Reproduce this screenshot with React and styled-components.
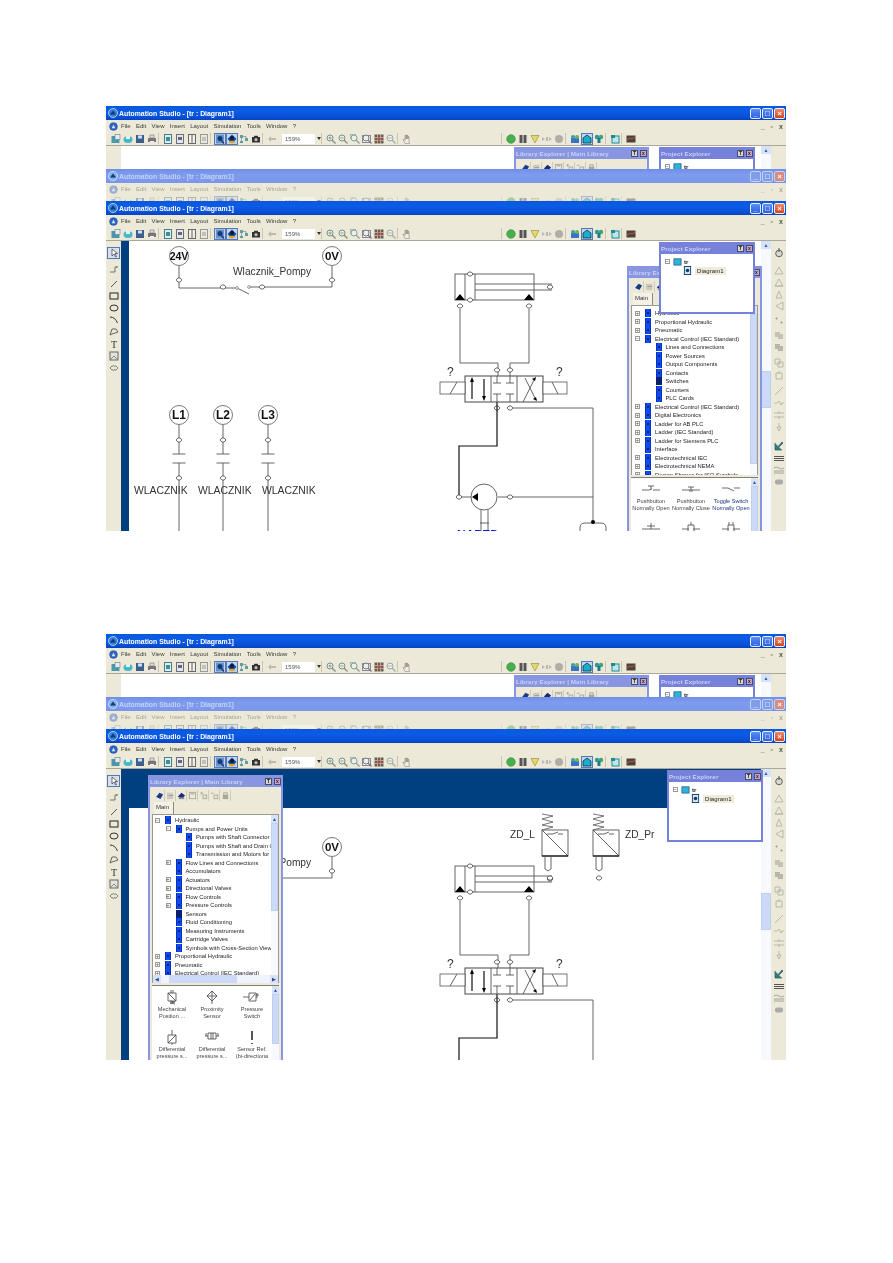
import React from 'react';
import styled, { createGlobalStyle } from 'styled-components';

const Global = createGlobalStyle`
  html, body { margin: 0; padding: 0; background: #fff; }
  body { font-family: "Liberation Sans", Arial, sans-serif; }
`;

const Page = styled.main`
  width: 893px;
  height: 1263px;
  box-sizing: border-box;
  padding: 106px 0 0 106px;
  overflow: hidden;
  display: flex;
  flex-direction: column;
  gap: 103px;
`;

const Shot = styled.section`
  width: 680px;
  display: flex;
  flex-direction: column;
  filter: blur(0.45px);
`;

const Frame = styled.div`
  height: ${({ $height }) => $height}px;
  overflow: hidden;
  display: flex;
  flex-direction: column;
  background: #fff;
`;

const TitleBar = styled.div`
  height: 14px;
  flex: none;
  display: flex;
  align-items: center;
  padding: 0 1px 0 2px;
  box-sizing: border-box;
  color: ${({ $faded }) => ($faded ? '#c4d0f6' : '#fff')};
  background: ${({ $faded }) =>
    $faded
      ? 'linear-gradient(#6f8fe8, #7f9bee 40%, #7b96ea)'
      : 'linear-gradient(#0b57dd, #0a5ce6 35%, #0a4fd8 80%, #0643bd)'};
`;

const TitleText = styled.span`
  font-size: 6.9px;
  font-weight: bold;
  letter-spacing: 0;
  margin-left: 0;
  padding-left: 1px;
  white-space: nowrap;
  flex: 1;
`;

const WinButton = styled.span`
  width: 11px;
  height: 11px;
  margin-left: 1px;
  box-sizing: border-box;
  border: 1px solid ${({ $faded }) => ($faded ? '#c6d2f4' : '#e8eefc')};
  border-radius: 2px;
  background: ${({ $close, $faded }) =>
    $close
      ? $faded ? '#d98a7e' : 'linear-gradient(#ee8a6a, #d8401c)'
      : $faded ? '#7f9eea' : 'linear-gradient(#5c90f4, #2a5ee0)'};
  color: #fff;
  font-size: 8px;
  line-height: 9px;
  font-weight: bold;
  text-align: center;
`;

const MenuBar = styled.div`
  height: 12px;
  flex: none;
  display: flex;
  align-items: center;
  background: #ece9d8;
  padding-left: 3px;
  font-size: 6px;
  color: #3a3a34;
`;

const Dimmable = styled.div`
  display: flex;
  align-items: center;
  height: 100%;
  opacity: ${({ $faded }) => ($faded ? 0.42 : 1)};
  flex: ${({ $grow }) => ($grow ? 1 : 'none')};
`;

const MenuLogo = styled.span`
  display: flex;
  margin-right: 3px;
`;

const MenuItem = styled.span`
  margin-right: 5.3px;
  white-space: nowrap;
`;

const MdiControls = styled.span`
  display: flex;
  gap: 6px;
  padding-right: 3px;
  font-size: 7px;
  font-weight: bold;
  color: #55554c;
`;

const ToolBar = styled.div`
  height: 13px;
  flex: none;
  display: flex;
  align-items: center;
  background: #ece9d8;
  padding-left: 4px;
  border-bottom: 1px solid #aca899;
  overflow: hidden;
`;

const ToolGroup = styled.div`
  display: flex;
  align-items: center;
  height: 11px;
  box-sizing: border-box;
  margin-left: ${({ $gap }) => $gap || 0}px;
  padding-left: ${({ $first }) => ($first ? 0 : 3)}px;
  border-left: ${({ $first }) => ($first ? 'none' : '1px solid #c9c5b2')};
`;

const ToolButton = styled.span`
  width: 12px;
  height: 12px;
  box-sizing: border-box;
  display: flex;
  align-items: center;
  justify-content: center;
  border: 1px solid ${({ $on }) => ($on ? '#5479b8' : 'transparent')};
  background: ${({ $on }) => ($on ? '#c7d5ec' : 'transparent')};
`;

const Combo = styled.div`
  width: 39px;
  margin-left: 4px;
  display: flex;
  align-items: center;
  flex: none;
`;

const ComboField = styled.span`
  width: 33px;
  height: 10px;
  background: #fff;
  font-size: 6px;
  line-height: 10px;
  padding-left: 3px;
  box-sizing: border-box;
  color: #555;
`;

const ComboArrow = styled.span`
  margin-left: 2px;
  width: 0;
  height: 0;
  border: 2px solid transparent;
  border-top: 3px solid #333;
  border-bottom: 0;
`;

const Workspace = styled.div`
  flex: 1;
  min-height: 0;
  display: flex;
`;

const SideTools = styled.div`
  width: 15px;
  flex: none;
  background: #ece9d8;
  display: flex;
  flex-direction: column;
  align-items: center;
  padding-top: 6px;
  box-sizing: border-box;
  overflow: hidden;
`;

const SideGroup = styled.div`
  display: flex;
  flex-direction: column;
  align-items: center;
  margin-top: ${({ $gap }) => $gap || 0}px;
`;

const SideButton = styled.span`
  width: 13px;
  height: 12px;
  box-sizing: border-box;
  display: flex;
  align-items: center;
  justify-content: center;
  border: 1px solid ${({ $on }) => ($on ? '#5479b8' : 'transparent')};
  background: ${({ $on }) => ($on ? '#d8e0ee' : 'transparent')};
`;

const DocArea = styled.div`
  position: relative;
  flex: 1;
  min-width: 0;
  box-sizing: border-box;
  background: ${({ $band }) => ($band ? '#003f80' : '#fff')};
  padding: ${({ $top }) => $top || 0}px 0 0 8px;
`;

const Sheet = styled.div`
  background: #fff;
  height: 100%;
`;

const Drawing = styled.svg`
  display: block;
  text { font-family: "Liberation Sans", Arial, sans-serif; }
`;

const ScrollTrack = styled.div`
  width: ${({ $w }) => $w || 10}px;
  flex: none;
  background: #f8f9fe;
  display: flex;
  flex-direction: column;
  align-items: stretch;
  overflow: hidden;
`;

const ScrollArrow = styled.span`
  height: 8px;
  flex: none;
  background: #d6e1fa;
  color: #3a5aa8;
  font-size: 5px;
  line-height: 8px;
  text-align: center;
`;

const ScrollThumb = styled.span`
  flex: none;
  height: ${({ $h }) => $h}px;
  margin-top: ${({ $top }) => $top}px;
  background: #ccd9f8;
  border: 1px solid #bfcff4;
  box-sizing: border-box;
`;

const Panel = styled.div`
  position: absolute;
  left: ${({ $x }) => $x}px;
  top: ${({ $y }) => $y}px;
  width: ${({ $w }) => $w}px;
  height: ${({ $h }) => $h}px;
  box-sizing: border-box;
  border: 2px solid ${({ $frame }) => $frame};
  border-top-width: 1px;
  background: #ece9d8;
  display: flex;
  flex-direction: column;
  overflow: hidden;
  z-index: ${({ $z }) => $z || 1};
`;

const PanelTitle = styled.div`
  height: 11px;
  flex: none;
  display: flex;
  align-items: center;
  background: ${({ $frame }) => $frame};
  color: #c9d2f6;
  font-size: 6.2px;
  font-weight: bold;
  letter-spacing: 0.1px;
  margin: 0 -2px;
  padding: 0 2px;
  white-space: nowrap;
`;

const PanelTitleText = styled.span`
  flex: 1;
  overflow: hidden;
`;

const PanelButton = styled.span`
  width: 7px;
  height: 7px;
  margin-left: 2px;
  background: ${({ $close }) => ($close ? '#c8a4c8' : '#d8d6cc')};
  border: 1px solid #4a4a70;
  box-sizing: border-box;
  color: #222;
  font-size: 5px;
  line-height: 5px;
  text-align: center;
  flex: none;
`;

const LibTools = styled.div`
  height: 14px;
  flex: none;
  display: flex;
  align-items: center;
  padding: 2px 0 0 4px;
  box-sizing: border-box;
`;

const LibTool = styled.span`
  width: 11px;
  height: 11px;
  box-sizing: border-box;
  border-right: 1px solid #cfcbb8;
  display: flex;
  align-items: center;
  justify-content: center;
`;

const TabRow = styled.div`
  height: 13px;
  flex: none;
  display: flex;
  align-items: flex-end;
  padding-left: 4px;
`;

const Tab = styled.span`
  width: 20px;
  height: 12px;
  font-size: 6px;
  line-height: 11px;
  padding-left: 2px;
  box-sizing: border-box;
  background: #f4f2e6;
  border-right: 1px solid #8c8a7c;
  color: #333;
`;

const TreeBox = styled.div`
  height: ${({ $h }) => $h}px;
  flex: none;
  display: flex;
  margin: 0 2px;
  background: #fff;
  border: 1px solid #9c9a8c;
  border-bottom: 0;
  box-sizing: border-box;
  overflow: hidden;
`;

const TreeList = styled.div`
  flex: 1;
  min-width: 0;
  overflow: hidden;
  padding: ${({ $pad }) => $pad}px 0 0 ${({ $left }) => $left}px;
`;

const TreeRow = styled.div`
  height: 8.5px;
  display: flex;
  align-items: center;
  padding-left: ${({ $level }) => $level * 10.5}px;
  white-space: nowrap;
`;

const Expander = styled.span`
  width: 5px;
  height: 5px;
  box-sizing: border-box;
  flex: none;
  margin-right: 5px;
  border: ${({ $show }) => ($show ? '1px solid #9a9a90' : 'none')};
  color: #444;
  font-size: 5px;
  line-height: 3px;
  text-align: center;
`;

const ProjectExpander = styled(Expander)`
  margin-right: 3px;
`;

const TreeIcon = styled.span`
  width: 6px;
  height: 8px;
  flex: none;
  margin-right: 4px;
  box-sizing: border-box;
  background: ${({ $on }) => ($on ? '#0a1f70' : '#0c4cf0')};
  border-left: 1px solid ${({ $on }) => ($on ? '#0a1f70' : '#0a2fc0')};
  border-right: 1px solid ${({ $on }) => ($on ? '#0a1f70' : '#0a2fc0')};
  position: relative;
  &::after {
    content: '';
    position: absolute;
    left: 1px;
    top: 3px;
    width: 2px;
    height: 2px;
    background: #0a2070;
  }
`;

const TreeLabel = styled.span`
  font-size: 5.8px;
  color: #222;
`;

const HScroll = styled.div`
  height: 8px;
  flex: none;
  margin: 0 2px;
  background: #f0f3fb;
  display: flex;
  align-items: stretch;
  font-size: 5px;
  line-height: 8px;
  color: #2a4a98;
  border: 1px solid #9c9a8c;
  border-width: 0 1px;
  box-sizing: border-box;
`;

const HThumb = styled.span`
  width: 68px;
  margin-left: 8px;
  background: #ccd9f8;
`;

const HEnd = styled.span`
  width: 8px;
  text-align: center;
  background: #d6e1fa;
  margin-left: ${({ $auto }) => ($auto ? 'auto' : 0)};
`;

const PaletteBox = styled.div`
  flex: 1;
  min-height: 0;
  display: flex;
  margin: 2px 2px 0;
  background: #fff;
  border-top: 1px solid #808074;
  overflow: hidden;
`;

const PaletteGrid = styled.div`
  flex: 1;
  min-width: 0;
  display: grid;
  grid-template-columns: repeat(3, 1fr);
  grid-auto-rows: 40px;
  overflow: hidden;
`;

const PaletteCell = styled.div`
  display: flex;
  flex-direction: column;
  align-items: center;
  overflow: hidden;
  color: ${({ $on }) => ($on ? '#1e2f80' : '#444')};
`;

const PaletteArt = styled.svg`
  margin-top: 4px;
  flex: none;
`;

const PaletteLine = styled.span`
  font-size: 5.6px;
  line-height: 7px;
  white-space: nowrap;
`;

const ProjectBody = styled.div`
  flex: 1;
  background: #fff;
  padding: 3px 0 0 4px;
  box-sizing: border-box;
`;

const ProjectRow = styled.div`
  height: 9px;
  display: flex;
  align-items: center;
  padding-left: ${({ $level }) => $level * 9}px;
  font-size: 6px;
  color: #222;
`;

const ProjectRootLabel = styled.span`
  font-weight: bold;
  margin-left: 2px;
`;

const ProjectLeafLabel = styled.span`
  background: #efedda;
  margin-left: 3px;
  padding: 1px 2px;
  letter-spacing: 0.1px;
`;

const Mini = ({ children, s = 10 }) => (
  <svg width={s} height={s} viewBox="0 0 10 10">{children}</svg>
);

const Mag = ({ c = '#7d9084', children }) => (
  <>
    <circle cx="4" cy="4" r="3" fill="#e8f0e8" stroke={c} />
    <line x1="6" y1="6" x2="9.5" y2="9.5" stroke={c} strokeWidth="1.3" />
    {children}
  </>
);

const GLYPHS = {
  newDoc: <><rect x="0.5" y="2" width="8" height="7" fill="#4a97ae" /><rect x="4" y="0.5" width="5" height="5" fill="#dfeef2" stroke="#666" strokeWidth=".5" /></>,
  open: <><ellipse cx="5" cy="5.5" rx="4.5" ry="3.5" fill="#45b7c6" /><rect x="3" y="2" width="4" height="3" fill="#e2f2ee" /></>,
  save: <><rect x="1" y="1" width="8" height="8" fill="#3c5f8e" /><rect x="3" y="1.5" width="4" height="3" fill="#cfe0ee" /></>,
  print: <><rect x="1" y="4" width="8" height="4" fill="#777" /><rect x="3" y="1" width="4" height="3" fill="#ddd" stroke="#666" strokeWidth=".5" /><rect x="3" y="7" width="4" height="2" fill="#eee" /></>,
  page1: <><rect x="1.5" y="0.5" width="7" height="9" fill="#dceef0" stroke="#4d7a88" /><rect x="3" y="3" width="4" height="4" fill="#3f8f90" /></>,
  page2: <><rect x="1.5" y="0.5" width="7" height="9" fill="#e6e6ea" stroke="#66707e" /><rect x="3" y="3" width="4" height="3" fill="#667" /></>,
  page3: <><rect x="1.5" y="0.5" width="7" height="9" fill="#eee" stroke="#6a6a60" /><line x1="5" y1="1" x2="5" y2="9" stroke="#666" /></>,
  page4: <><rect x="1.5" y="0.5" width="7" height="9" fill="#e8e8e2" stroke="#9a9a90" /><line x1="3" y1="4" x2="7" y2="4" stroke="#999" /><line x1="3" y1="6" x2="7" y2="6" stroke="#999" /></>,
  zoomDoc: <><rect x="1" y="0.5" width="8" height="9" fill="#6a94c8" /><circle cx="5" cy="4.5" r="2.5" fill="#123a78" /><line x1="6" y1="6" x2="9" y2="9.5" stroke="#123a78" strokeWidth="1.3" /></>,
  zoomBlob: <><path d="M5 .5L9.5 5 5 9.5.5 5z" fill="#1a4a98" /><circle cx="5" cy="4" r="2" fill="#0a1838" /><rect x="2" y="7" width="6" height="2" fill="#d8a830" /></>,
  tree: <><path d="M1 1h3v3H1zM6 4h3v3H6zM1 7h3v2H1z" fill="#5aa0a6" /><path d="M4 2.5h3V4M2.5 4v3" stroke="#777" fill="none" strokeWidth=".6" /></>,
  camera: <><rect x="1" y="3" width="8" height="5.5" fill="#333" /><rect x="3" y="1.8" width="4" height="2" fill="#333" /><circle cx="5" cy="5.7" r="1.6" fill="#bbb" /></>,
  back: <path d="M1 5l3-3v2h5v2H4v2z" fill="#bdb9ac" />,
  magPlus: <Mag><path d="M2.500 4h3M4 2.500v3" stroke="#678" strokeWidth=".7" /></Mag>,
  magMinus: <Mag><path d="M2.500 4h3" stroke="#678" strokeWidth=".7" /></Mag>,
  magDoc: <><rect x="0.5" y="0.5" width="5" height="4" fill="#cfe0d4" stroke="#8aa498" strokeWidth=".6" /><Mag c="#86a098" /></>,
  magBox: <><rect x="0.5" y="1.5" width="8" height="7" fill="#f0f0ea" stroke="#889" /><Mag c="#778" /></>,
  magGrid: <><rect x="0.5" y="0.5" width="9" height="9" fill="#6e5e52" /><path d="M3.500 0v10M6.500 0v10M0 3.500h10M0 6.500h10" stroke="#d8c4b0" strokeWidth=".7" /><rect x="3.500" y="3.500" width="3" height="3" fill="#b84850" /></>,
  magBack: <Mag c="#9aaaa4"><path d="M2 4h4" stroke="#c090a8" strokeWidth=".7" /></Mag>,
  hand: <path d="M3 9.5L1 5.5l1-.5 1 1.5V1.5h1V5 1h1v4-3.5h1V5 2.5h1V7L7.5 9.5z" fill="#f2efe2" stroke="#8a7a7a" strokeWidth=".55" />,
  run: <circle cx="5" cy="5" r="4.3" fill="#46b04e" stroke="#3a8a40" strokeWidth=".6" />,
  pause: <><rect x="1.5" y="1" width="3" height="8" fill="#555" /><rect x="5.5" y="1" width="3" height="8" fill="#555" /></>,
  funnel: <path d="M1 1.5h8L5 9z" fill="#e6d860" stroke="#9a9248" strokeWidth=".7" />,
  fast: <path d="M0 3l3 2-3 2zM4 3h2v4H4zM7 3l3 2-3 2z" fill="#bab8ae" />,
  stop: <circle cx="5" cy="5" r="4" fill="#b0aea6" />,
  net1: <><rect x="1" y="4" width="8" height="5" fill="#3a72c8" /><circle cx="3" cy="3" r="2" fill="#3aa0a0" /><circle cx="7" cy="3" r="2" fill="#6ab05a" /></>,
  net2: <path d="M1 9V4l4-3 4 3v5z" fill="#16b0c8" stroke="#0a3050" strokeWidth=".8" />,
  net3: <><circle cx="3" cy="3" r="2.2" fill="#2f9a98" /><circle cx="7" cy="3" r="2.2" fill="#4aa07a" /><rect x="3.5" y="4" width="3" height="5" fill="#1f7a90" /></>,
  net4: <><rect x="2" y="2" width="7" height="7" fill="#bfe6e6" stroke="#1f8a98" /><rect x="1" y="1" width="4" height="3" fill="#1f8a98" /></>,
  chart: <><rect x="0.5" y="1.5" width="9" height="7" fill="#4a4440" /><path d="M1 6l3-2 2 1 3-2" stroke="#e05030" fill="none" strokeWidth=".9" /></>,
};

const TOOLBAR_GROUPS = [
  { first: true, items: ['newDoc', 'open', 'save', 'print'] },
  { items: ['page1', 'page2', 'page3', 'page4'] },
  { items: [{ g: 'zoomDoc', on: true }, { g: 'zoomBlob', on: true }, 'tree', 'camera'] },
  { items: ['back'] },
  { combo: true },
  { items: ['magPlus', 'magMinus', 'magDoc', 'magBox', 'magGrid', 'magBack'] },
  { items: ['hand'] },
  { gap: 88, items: ['run', 'pause', 'funnel', 'fast', 'stop'] },
  { items: ['net1', { g: 'net2', on: true }, 'net3'] },
  { items: ['net4'] },
  { items: ['chart'] },
];

const MENU = ['File', 'Edit', 'View', 'Insert', 'Layout', 'Simulation', 'Tools', 'Window', '?'];

const Toolbar = ({ faded }) => (
  <ToolBar>
    <Dimmable $faded={faded}>
      {TOOLBAR_GROUPS.map((group, i) =>
        group.combo ? (
          <Combo key={i}>
            <ComboField>159%</ComboField>
            <ComboArrow />
          </Combo>
        ) : (
          <ToolGroup key={i} $first={group.first} $gap={group.gap}>
            {group.items.map((item, j) => {
              const kind = item.g || item;
              return (
                <ToolButton key={j} $on={item.on}>
                  <Mini>{GLYPHS[kind]}</Mini>
                </ToolButton>
              );
            })}
          </ToolGroup>
        )
      )}
    </Dimmable>
  </ToolBar>
);

const AppLogo = ({ light }) => (
  <svg width="10" height="10" viewBox="0 0 10 10">
    <circle cx="5" cy="5" r="4.5" fill={light ? '#7fb0e8' : '#2f7fd8'} stroke="#e8f0fa" strokeWidth=".7" />
    <path d="M2 6.5l3-4 3 4z" fill="#123a78" />
  </svg>
);

const LEFT_GROUPS = [
  { gap: 0, items: [{ on: true, d: <path d="M3 1v7l2-2 1.500 3 1-.5L6 5.500h2.500z" fill="#fff" stroke="#333" strokeWidth=".7" /> }] },
  { gap: 4, items: [{ d: <path d="M2 8h4V3h2M1 8h1M8 2v2" stroke="#555" fill="none" strokeWidth=".8" /> }] },
  {
    gap: 3,
    items: [
      { d: <line x1="2" y1="8" x2="8" y2="2" stroke="#555" /> },
      { d: <rect x="1" y="2" width="8" height="6" fill="none" stroke="#222" /> },
      { d: <ellipse cx="5" cy="5" rx="4" ry="3" fill="none" stroke="#333" /> },
      { d: <path d="M1 2Q6 2 8.5 8" fill="none" stroke="#333" /> },
      { d: <path d="M1 8L3 2h4l2 3-6 2z" fill="none" stroke="#444" strokeWidth=".8" /> },
      { d: <text x="5" y="9" textAnchor="middle" fontSize="10" fontFamily="Liberation Serif" fill="#333">T</text> },
      { d: <><rect x="1" y="1" width="8" height="8" fill="#e4e4da" stroke="#666" /><path d="M2 8l3-3 3 3" stroke="#888" fill="none" /></> },
      { d: <path d="M1 5l2-2h4l2 2-2 2H3z" fill="none" stroke="#666" strokeWidth=".8" /> },
    ],
  },
];

const greyStroke = { stroke: '#b4b2a6', fill: 'none', strokeWidth: 0.9 };

const RIGHT_GROUPS = [
  { gap: 0, items: [<><circle cx="5" cy="5.500" r="3.300" stroke="#555" fill="#d8d8cc" strokeWidth=".9" /><path d="M5 0v4" stroke="#555" /></>] },
  { gap: 5, items: [<path d="M1 9l4-7 4 7z" {...greyStroke} />, <path d="M1 9l4-7 4 7zM1 9h8" {...greyStroke} />, <path d="M2 9l3-7 3 7z" {...greyStroke} />, <path d="M9 1L2 5l7 4z" {...greyStroke} />] },
  { gap: 2, items: [<path d="M2 3h1v1H2zM7 7h1v1H7z" stroke="#999" fill="#999" />] },
  { gap: 3, items: [<path d="M1 2h5v5H1zM4 4h5v5H4z" fill="#c4c2b8" />, <path d="M1 2h5v5H1zM4 4h5v5H4z" fill="#b8b6aa" />] },
  { gap: 4, items: [<path d="M1 1h5v5H1zM4 4h5v5H4z" {...greyStroke} />, <path d="M2 3h6v6H2zM5 1v3" {...greyStroke} />] },
  { gap: 4, items: [<line x1="1" y1="9" x2="9" y2="1" {...greyStroke} />, <path d="M0 5h3l2-2 2 4 1-2h2" {...greyStroke} />, <path d="M0 3h10M0 7h10M5 1v3M5 6v3" {...greyStroke} />, <path d="M5 1v4M3 5h4l-2 4z" {...greyStroke} />] },
  { gap: 7, items: [<path d="M1 2v7h7M3 7l5-6 1 1-5 5z" fill="#3a7a90" stroke="#1f5a5a" strokeWidth=".7" />, <path d="M0 3h10v1H0zM0 5h10v1H0zM0 7h10v1H0z" fill="#555" />, <path d="M0 3q2-2 5 0t5 0M0 6h10M0 8h10" stroke="#888" fill="none" strokeWidth=".7" />, <rect x="1" y="2.500" width="8" height="5" rx="2" fill="#aaa" />] },
];

const Node = ({ x, y }) => (
  <path
    d={`M${x - 3} ${y}L${x - 1.2} ${y - 2}H${x + 1.2}L${x + 3} ${y}L${x + 1.2} ${y + 2}H${x - 1.2}Z`}
    fill="#fff"
    stroke="#444"
    strokeWidth="0.8"
  />
);

const Wire = ({ d, heavy }) => (
  <path d={d} fill="none" stroke={heavy ? '#111' : '#555'} strokeWidth={heavy ? 1.2 : 0.9} />
);

const Badge = ({ x, y, label, size = 12 }) => (
  <g>
    <circle cx={x} cy={y} r="9.5" fill="#fff" stroke="#555" strokeWidth="0.8" />
    <text x={x} y={y + size * 0.36} textAnchor="middle" fontSize={size} fontWeight="bold" fill="#111">{label}</text>
  </g>
);

const PowerLine = () => (
  <g>
    <Badge x={179} y={255} label="24V" size={10.5} />
    <Badge x={332} y={255} label="0V" size={11.5} />
    <Wire d="M179 265V287H237M249 286H332V265" />
    <Wire d="M237 287L249 293" />
    <circle cx="237" cy="287" r="1.400" fill="#fff" stroke="#555" strokeWidth=".6" />
    <circle cx="249" cy="286" r="1.400" fill="#fff" stroke="#555" strokeWidth=".6" />
    <Node x={179} y={279} />
    <Node x={332} y={279} />
    <Node x={223} y={286} />
    <Node x={262} y={286} />
    <text x="233" y="274" fontSize="10.2" fill="#333">Wlacznik_Pompy</text>
  </g>
);

const Lamp = ({ x, label, textX }) => (
  <g>
    <Badge x={x} y={414} label={label} />
    <Wire d={`M${x} 424V453M${x - 6.5} 453H${x + 6.5}M${x - 6.5} 462H${x + 6.5}M${x} 462V531`} />
    <Node x={x} y={439} />
    <Node x={x} y={477} />
    <text x={textX} y="493" fontSize="10.4" fill="#333">WLACZNIK</text>
  </g>
);

const Cylinder = () => (
  <g>
    <rect x="455" y="273" width="79" height="26" fill="#fff" stroke="#555" strokeWidth=".9" />
    <Wire d="M465 273V299M475 273V299M475 283H552M475 289H552" />
    <path d="M455 299l5-6 5 6zM524 299l5-6 5 6z" fill="#000" />
    <Node x={470} y={273} />
    <Node x={470} y={299} />
    <Node x={550} y={286} />
    <Node x={460} y={305} />
    <Node x={529} y={305} />
  </g>
);

const Valve = () => (
  <g>
    <rect x="465" y="375" width="78" height="26" fill="#fff" stroke="#444" strokeWidth="1" />
    <rect x="440" y="381" width="25" height="12" fill="#fff" stroke="#555" strokeWidth=".8" />
    <rect x="543" y="381" width="24" height="12" fill="#fff" stroke="#555" strokeWidth=".8" />
    <Wire d="M450 393L457 381M552 381L558 393M491 375V401M517 375V401" />
    <Wire d="M472 398V378M484 378V398" heavy />
    <path d="M472 376l-2 5h4zM484 400l-2-5h4z" fill="#000" />
    <Wire d="M497 375V382M493 382H501M510 375V382M506 382H514M493 393H501M497 393V401M506 393H514M510 393V401" />
    <Wire d="M523 401L535 377M525 377L536 399" />
    <path d="M536 376l-4 2 3 2zM537 400l-4-2 3-2z" fill="#000" />
    <text x="447" y="375" fontSize="12" fill="#333">?</text>
    <text x="556" y="375" fontSize="12" fill="#333">?</text>
  </g>
);

const ValveLines = () => (
  <g>
    <Wire d="M460 308V362H498V375M529 308V362H510V375" />
    <Node x={497} y={369} />
    <Node x={510} y={369} />
    <Node x={497} y={407} />
    <Node x={510} y={407} />
    <Wire d="M497 401V445H459V496" heavy />
    <Wire d="M513 407H593V521" />
  </g>
);

const PumpUnit = () => (
  <g>
    <Wire d="M459 496H471M498 496H593" />
    <circle cx="484" cy="496" r="13" fill="#fff" stroke="#555" strokeWidth=".9" />
    <path d="M472 496l6-4v8z" fill="#000" />
    <Node x={459} y={496} />
    <Node x={510} y={496} />
    <Wire d="M481 509V531M488 509V531M480 522H489" />
    <Wire d="M580 531V527Q580 522 585 522H601Q606 522 606 527V531" />
    <circle cx="593" cy="521" r="2" fill="#000" />
    <text x="457" y="537.5" fontSize="12" fontWeight="bold" fill="#0a18d8">NAPED</text>
  </g>
);

const Sensor = ({ x, label, textX, probeX, probeEnd }) => (
  <g>
    <rect x={x} y="829" width="26" height="26" fill="#fff" stroke="#555" strokeWidth=".9" />
    <path d={`M${x} 813l11 2-11 3 11 3-11 3 11 2-11 3`} fill="none" stroke="#555" strokeWidth=".8" />
    <Wire d={`M${x} 829L${x + 26} 855M${x + 5} 833H${x + 11}M${x + 11} 833L${x + 16} 831M${x + 16} 833H${x + 21}`} />
    <path d={`M${x} 855H${x + 26}`} stroke="#111" strokeWidth="1.2" />
    <Wire d={`M${probeX} 855V868L${probeX + 3} 870L${probeX + 6} 868V855`} />
    <Node x={probeEnd} y={877} />
    <text x={textX} y="837" fontSize="10.2" fill="#333">{label}</text>
  </g>
);

const Circuit = ({ dy = 0, withPump }) => (
  <g transform={`translate(0 ${dy})`}>
    <Cylinder />
    <ValveLines />
    <Valve />
    {withPump && <PumpUnit />}
  </g>
);

const TreeRows = ({ rows, pad, left }) => (
  <TreeList $pad={pad} $left={left}>
    {rows.map((row, i) => (
      <TreeRow key={i} $level={row.l || 0}>
        <Expander $show={row.x}>{row.x}</Expander>
        <TreeIcon $on={row.on} />
        <TreeLabel>{row.t}</TreeLabel>
      </TreeRow>
    ))}
  </TreeList>
);

const PAL = { fill: 'none', stroke: '#444', strokeWidth: 0.8 };

const PALETTE_ART = {
  pushOpen: <path d="M1 8h7M12 8h7M8 8l3-1M7 4h6M10 4v3" {...PAL} />,
  pushClosed: <path d="M1 8h18M7 5h6M10 5v3M8 9h4" {...PAL} />,
  toggle: <path d="M1 6h6l6 3M13 6h6" {...PAL} />,
  contact: <path d="M1 7h18M6 4h8M10 1v6" {...PAL} />,
  contactB: <path d="M1 7h7M12 7h7M7 3h6v8H7zM10 0v3" {...PAL} />,
  contactC: <path d="M1 7h7M12 7h7M7 3h6v8H7zM8 0v3M12 0v3" {...PAL} />,
  mech: <path d="M6 3h8v8H6zM6 3l8 8M9 0v3M11 0v3M8 11l5 1-5 1 5 1" {...PAL} />,
  prox: <path d="M10 1l5 5-5 5-5-5zM5 6h10M10 1v13" {...PAL} />,
  press: <path d="M1 7h6M7 3h7v8H7zM8 10l5-6M14 5h3M15 3v5" {...PAL} />,
  diffA: <path d="M6 5h8v8H6zM6 13l8-8M10 0v5M10 13v2" {...PAL} />,
  diffB: <path d="M3 6h3M6 3h8v6H6zM14 6h3M9 3v6M11 3v6M4 3v3M16 3v3" {...PAL} />,
  sensorRef: <path d="M10 1v9M10 13v1" fill="none" stroke="#111" strokeWidth="1.4" />,
};

const PaletteItem = ({ art, lines, on }) => (
  <PaletteCell $on={on}>
    <PaletteArt width="20" height="16" viewBox="0 0 20 16">{PALETTE_ART[art]}</PaletteArt>
    <PaletteLine>{lines[0]}</PaletteLine>
    <PaletteLine>{lines[1]}</PaletteLine>
  </PaletteCell>
);

const LIB_TOOLS = [
  <><path d="M1 7l4-5 4 2-3 5z" fill="#1a3a8a" /><path d="M1 7l4 2" stroke="#e8e8f0" /></>,
  <><rect x="1" y="2" width="7" height="7" fill="#ccc9ba" /><path d="M3 5h5" stroke="#999" /></>,
  <><path d="M1 6l4-4 4 3-4 4z" fill="#1a2a78" /><rect x="2" y="7" width="6" height="2" fill="#889" /></>,
  <><rect x="1.500" y="1.500" width="7" height="7" fill="none" stroke="#aaa89a" /><rect x="3" y="2" width="4" height="2" fill="#bbb9aa" /></>,
  <><path d="M3 1v3M1.500 2.500h3" stroke="#a8a69a" /><rect x="4.500" y="4.500" width="4" height="4" fill="none" stroke="#a8a69a" /></>,
  <><path d="M1 2.500h3" stroke="#a8a69a" /><rect x="4.500" y="4.500" width="4" height="4" fill="none" stroke="#a8a69a" /></>,
  <><rect x="2" y="4" width="6" height="5" fill="#a8a69a" /><path d="M3 4V2h4v2" stroke="#a8a69a" fill="none" /></>,
];

const LibraryPanel = ({ x, y, rows, palette, treeH, pad, left, hscroll, z }) => (
  <Panel $x={x} $y={y} $w={135} $h={300} $frame="#8896e2" $z={z}>
    <PanelTitle $frame="#8896e2">
      <PanelTitleText>Library Explorer | Main Library</PanelTitleText>
      <PanelButton>T</PanelButton>
      <PanelButton $close>x</PanelButton>
    </PanelTitle>
    <LibTools>
      {LIB_TOOLS.map((tool, i) => (
        <LibTool key={i}><Mini s={9}>{tool}</Mini></LibTool>
      ))}
    </LibTools>
    <TabRow><Tab>Main</Tab></TabRow>
    <TreeBox $h={treeH}>
      <TreeRows rows={rows} pad={pad} left={left} />
      <ScrollTrack $w={7}>
        <ScrollArrow>▲</ScrollArrow>
        <ScrollThumb $h={hscroll ? 88 : 150} $top={0} />
      </ScrollTrack>
    </TreeBox>
    {hscroll && (
      <HScroll>
        <HEnd>◀</HEnd>
        <HThumb />
        <HEnd $auto>▶</HEnd>
      </HScroll>
    )}
    <PaletteBox>
      <PaletteGrid>
        {palette.map((item, i) => <PaletteItem key={i} {...item} />)}
      </PaletteGrid>
      <ScrollTrack $w={7}>
        <ScrollArrow>▲</ScrollArrow>
        <ScrollThumb $h={50} $top={0} />
      </ScrollTrack>
    </PaletteBox>
  </Panel>
);

const ProjectPanel = ({ x, y }) => (
  <Panel $x={x} $y={y} $w={96} $h={72} $frame="#7682da" $z={3}>
    <PanelTitle $frame="#7682da">
      <PanelTitleText>Project Explorer</PanelTitleText>
      <PanelButton>T</PanelButton>
      <PanelButton $close>x</PanelButton>
    </PanelTitle>
    <ProjectBody>
      <ProjectRow $level={0}>
        <ProjectExpander $show="−">−</ProjectExpander>
        <Mini s={9}><rect x="1" y="2" width="8" height="7" fill="#2fb2d8" stroke="#0a4a70" strokeWidth=".7" /></Mini>
        <ProjectRootLabel>tr</ProjectRootLabel>
      </ProjectRow>
      <ProjectRow $level={2}>
        <Mini s={9}><rect x="1.500" y=".5" width="7" height="9" fill="#cfe8ea" stroke="#123a60" /><circle cx="5" cy="5" r="2" fill="#123a80" /></Mini>
        <ProjectLeafLabel>Diagram1</ProjectLeafLabel>
      </ProjectRow>
    </ProjectBody>
  </Panel>
);

const Window = ({ height, faded, tools, thumb, rightTools, band, top, children }) => (
  <Frame $height={height}>
    <TitleBar $faded={faded}>
      <AppLogo light={faded} />
      <TitleText>Automation Studio - [tr : Diagram1]</TitleText>
      <WinButton $faded={faded}>_</WinButton>
      <WinButton $faded={faded}>□</WinButton>
      <WinButton $faded={faded} $close>×</WinButton>
    </TitleBar>
    <MenuBar>
      <Dimmable $faded={faded} $grow>
        <MenuLogo>
          <Mini s={9}><circle cx="5" cy="5" r="4.300" fill="#2a6ad0" stroke="#123a80" strokeWidth=".6" /><path d="M3 7l2-4 2 4z" fill="#dfe8f8" /></Mini>
        </MenuLogo>
        {MENU.map((item) => <MenuItem key={item}>{item}</MenuItem>)}
      </Dimmable>
      <Dimmable $faded={faded}>
        <MdiControls><span>_</span><span>▫</span><span>x</span></MdiControls>
      </Dimmable>
    </MenuBar>
    <Toolbar faded={faded} />
    <Workspace>
      <SideTools>
        {tools && LEFT_GROUPS.map((group, i) => (
          <SideGroup key={i} $gap={group.gap}>
            {group.items.map((item, j) => (
              <SideButton key={j} $on={item.on}><Mini>{item.d}</Mini></SideButton>
            ))}
          </SideGroup>
        ))}
      </SideTools>
      <DocArea $band={band} $top={top}>{children}</DocArea>
      <ScrollTrack>
        <ScrollArrow>▲</ScrollArrow>
        {thumb !== undefined && <ScrollThumb $h={37} $top={thumb} />}
      </ScrollTrack>
      <SideTools>
        {rightTools && RIGHT_GROUPS.map((group, i) => (
          <SideGroup key={i} $gap={group.gap}>
            {group.items.map((item, j) => (
              <SideButton key={j}><Mini>{item}</Mini></SideButton>
            ))}
          </SideGroup>
        ))}
      </SideTools>
    </Workspace>
  </Frame>
);

const ELECTRIC_ROWS = [
  { t: 'Hydraulic', x: '+' },
  { t: 'Proportional Hydraulic', x: '+' },
  { t: 'Pneumatic', x: '+' },
  { t: 'Electrical Control (IEC Standard)', x: '−' },
  { t: 'Lines and Connections', l: 1 },
  { t: 'Power Sources', l: 1 },
  { t: 'Output Components', l: 1 },
  { t: 'Contacts', l: 1 },
  { t: 'Switches', l: 1, on: true },
  { t: 'Counters', l: 1 },
  { t: 'PLC Cards', l: 1 },
  { t: 'Electrical Control (IEC Standard)', x: '+' },
  { t: 'Digital Electronics', x: '+' },
  { t: 'Ladder for AB PLC', x: '+' },
  { t: 'Ladder (IEC Standard)', x: '+' },
  { t: 'Ladder for Siemens PLC', x: '+' },
  { t: 'Interface' },
  { t: 'Electrotechnical IEC', x: '+' },
  { t: 'Electrotechnical NEMA', x: '+' },
  { t: 'Design Shapes for ISO Symbols', x: '+' },
];

const HYDRAULIC_ROWS = [
  { t: 'Hydraulic', x: '−' },
  { t: 'Pumps and Power Units', l: 1, x: '−' },
  { t: 'Pumps with Shaft Connector', l: 2 },
  { t: 'Pumps with Shaft and Drain Connector', l: 2 },
  { t: 'Transmission and Motors for', l: 2 },
  { t: 'Flow Lines and Connections', l: 1, x: '+' },
  { t: 'Accumulators', l: 1 },
  { t: 'Actuators', l: 1, x: '+' },
  { t: 'Directional Valves', l: 1, x: '+' },
  { t: 'Flow Controls', l: 1, x: '+' },
  { t: 'Pressure Controls', l: 1, x: '+' },
  { t: 'Sensors', l: 1, on: true },
  { t: 'Fluid Conditioning', l: 1 },
  { t: 'Measuring Instruments', l: 1 },
  { t: 'Cartridge Valves', l: 1 },
  { t: 'Symbols with Cross-Section View', l: 1 },
  { t: 'Proportional Hydraulic', x: '+' },
  { t: 'Pneumatic', x: '+' },
  { t: 'Electrical Control (IEC Standard)', x: '+' },
];

const SWITCH_PALETTE = [
  { art: 'pushOpen', lines: ['Pushbutton', 'Normally Open'] },
  { art: 'pushClosed', lines: ['Pushbutton', 'Normally Close'] },
  { art: 'toggle', lines: ['Toggle Switch', 'Normally Open'], on: true },
  { art: 'contact', lines: ['', ''] },
  { art: 'contactB', lines: ['', ''] },
  { art: 'contactC', lines: ['', ''] },
];

const SENSOR_PALETTE = [
  { art: 'mech', lines: ['Mechanical', 'Position ...'] },
  { art: 'prox', lines: ['Proximity', 'Sensor'] },
  { art: 'press', lines: ['Pressure', 'Switch'] },
  { art: 'diffA', lines: ['Differential', 'pressure s...'] },
  { art: 'diffB', lines: ['Differential', 'pressure s...'] },
  { art: 'sensorRef', lines: ['Sensor Ref.', '(bi-directiona'] },
];

const Backdrop = () => (
  <>
    <Window height={63} thumb={undefined}>
      <LibraryPanel x={393} y={1} rows={ELECTRIC_ROWS} palette={SWITCH_PALETTE} treeH={170} pad={3} left={3} />
      <ProjectPanel x={538} y={1} />
    </Window>
    <Window height={32} faded />
  </>
);

export default function App() {
  return (
    <Page>
      <Global />
      <Shot>
        <Backdrop />
        <Window height={330} tools rightTools band thumb={122}>
          <Sheet>
            <Drawing width="632" height="291" viewBox="129 240 632 291">
              <PowerLine />
              <Lamp x={179} label="L1" textX={134} />
              <Lamp x={223} label="L2" textX={198} />
              <Lamp x={268} label="L3" textX={262} />
              <Circuit withPump />
            </Drawing>
          </Sheet>
          <LibraryPanel x={506} y={25} rows={ELECTRIC_ROWS} palette={SWITCH_PALETTE} treeH={170} pad={3} left={3} />
          <ProjectPanel x={538} y={1} />
        </Window>
      </Shot>
      <Shot>
        <Backdrop />
        <Window height={331} tools rightTools band top={39} thumb={116}>
          <Sheet>
            <Drawing width="632" height="253" viewBox="129 807 632 253">
              <g transform="translate(0 591)"><PowerLine /></g>
              <Circuit dy={592} />
              <Sensor x={542} label="ZD_L" textX={510} probeX={545} probeEnd={550} />
              <Sensor x={593} label="ZD_Pr" textX={625} probeX={596} probeEnd={599} />
            </Drawing>
          </Sheet>
          <LibraryPanel x={27} y={6} rows={HYDRAULIC_ROWS} palette={SENSOR_PALETTE} treeH={161} pad={1} left={2} hscroll />
          <ProjectPanel x={546} y={1} />
        </Window>
      </Shot>
    </Page>
  );
}
